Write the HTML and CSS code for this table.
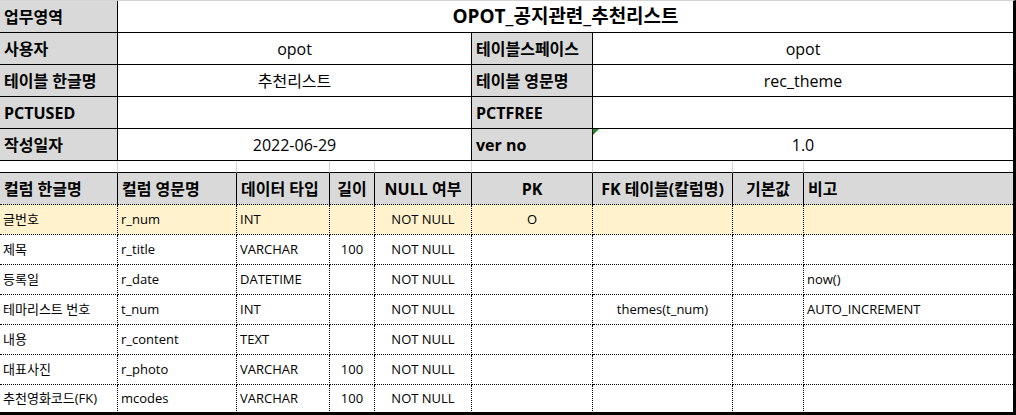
FILE: index.html
```html
<!DOCTYPE html>
<html lang="ko">
<head>
<meta charset="utf-8">
<title>OPOT_공지관련_추천리스트</title>
<link rel="stylesheet" href="styles.css">
</head>
<body>
<div class="sheet">
  <div class="c top lbl">업무영역</div>
  <div class="c top title end">OPOT_공지관련_추천리스트</div>

  <div class="c top lbl">사용자</div>
  <div class="c top val v1">opot</div>
  <div class="c top lbl">테이블스페이스</div>
  <div class="c top val v2 end">opot</div>

  <div class="c top lbl">테이블 한글명</div>
  <div class="c top val v1">추천리스트</div>
  <div class="c top lbl">테이블 영문명</div>
  <div class="c top val v2 end">rec_theme</div>

  <div class="c top lbl">PCTUSED</div>
  <div class="c top val v1"></div>
  <div class="c top lbl">PCTFREE</div>
  <div class="c top val v2 end"></div>

  <div class="c top lbl">작성일자</div>
  <div class="c top val v1">2022-06-29</div>
  <div class="c top lbl">ver no</div>
  <div class="c top val v2 end flag">1.0</div>

  <div class="c sp"></div><div class="c sp"></div><div class="c sp"></div>
  <div class="c sp"></div><div class="c sp"></div><div class="c sp"></div>
  <div class="c sp"></div><div class="c sp"></div><div class="c sp end"></div>

  <div class="c hd">컬럼 한글명</div>
  <div class="c hd">컬럼 영문명</div>
  <div class="c hd">데이터 타입</div>
  <div class="c hd ctr">길이</div>
  <div class="c hd ctr">NULL 여부</div>
  <div class="c hd ctr">PK</div>
  <div class="c hd ctr">FK 테이블(칼럼명)</div>
  <div class="c hd ctr">기본값</div>
  <div class="c hd end">비고</div>

  <div class="c d hl">글번호</div>
  <div class="c d hl">r_num</div>
  <div class="c d hl">INT</div>
  <div class="c d hl ctr"></div>
  <div class="c d hl ctr">NOT NULL</div>
  <div class="c d hl ctr">O</div>
  <div class="c d hl ctr"></div>
  <div class="c d hl ctr"></div>
  <div class="c d hl end"></div>

  <div class="c d">제목</div>
  <div class="c d">r_title</div>
  <div class="c d">VARCHAR</div>
  <div class="c d ctr">100</div>
  <div class="c d ctr">NOT NULL</div>
  <div class="c d ctr"></div>
  <div class="c d ctr"></div>
  <div class="c d ctr"></div>
  <div class="c d end"></div>

  <div class="c d">등록일</div>
  <div class="c d">r_date</div>
  <div class="c d">DATETIME</div>
  <div class="c d ctr"></div>
  <div class="c d ctr">NOT NULL</div>
  <div class="c d ctr"></div>
  <div class="c d ctr"></div>
  <div class="c d ctr"></div>
  <div class="c d end">now()</div>

  <div class="c d">테마리스트 번호</div>
  <div class="c d">t_num</div>
  <div class="c d">INT</div>
  <div class="c d ctr"></div>
  <div class="c d ctr">NOT NULL</div>
  <div class="c d ctr"></div>
  <div class="c d ctr">themes(t_num)</div>
  <div class="c d ctr"></div>
  <div class="c d end">AUTO_INCREMENT</div>

  <div class="c d">내용</div>
  <div class="c d">r_content</div>
  <div class="c d">TEXT</div>
  <div class="c d ctr"></div>
  <div class="c d ctr">NOT NULL</div>
  <div class="c d ctr"></div>
  <div class="c d ctr"></div>
  <div class="c d ctr"></div>
  <div class="c d end"></div>

  <div class="c d">대표사진</div>
  <div class="c d">r_photo</div>
  <div class="c d">VARCHAR</div>
  <div class="c d ctr">100</div>
  <div class="c d ctr">NOT NULL</div>
  <div class="c d ctr"></div>
  <div class="c d ctr"></div>
  <div class="c d ctr"></div>
  <div class="c d end"></div>

  <div class="c d last">추천영화코드(FK)</div>
  <div class="c d last">mcodes</div>
  <div class="c d last">VARCHAR</div>
  <div class="c d last ctr">100</div>
  <div class="c d last ctr">NOT NULL</div>
  <div class="c d last ctr"></div>
  <div class="c d last ctr"></div>
  <div class="c d last ctr"></div>
  <div class="c d last end"></div>
</div>
</body>
</html>
```

FILE: styles.css
```css
html, body {
  margin: 0;
  padding: 0;
  background: #ffffff;
}

body {
  font-family: "Open Sans", "Noto Sans CJK KR", sans-serif;
  color: #000000;
}

.sheet {
  display: grid;
  grid-template-columns: 118px 119px 93px 45px 97px 121px 140px 71px 209px;
  grid-template-rows: repeat(5, 32px) 12px 32px repeat(7, 30px);
  width: 1016px;
  height: 415px;
  box-sizing: border-box;
  border-top: 1px solid #d4d4d4;
  border-right: 3px solid #000000;
}

.c {
  box-sizing: border-box;
  display: flex;
  align-items: center;
  padding: 0 4px;
  white-space: nowrap;
  overflow: hidden;
  line-height: 1;
  position: relative;
}

.top {
  font-size: 16px;
  border-right: 1px solid #000000;
  border-bottom: 1px solid #000000;
}

.lbl {
  background: #d9d9d9;
  font-weight: 700;
}

.title {
  grid-column: 2 / -1;
  justify-content: center;
  font-size: 19px;
  font-weight: 700;
}

.val {
  justify-content: center;
}

.v1 {
  grid-column: span 4;
}

.v2 {
  grid-column: span 3;
}

.flag::before {
  content: "";
  position: absolute;
  left: 0;
  top: 0;
  width: 0;
  height: 0;
  border-top: 6px solid #1f8a1f;
  border-right: 6px solid transparent;
}

.sp {
  border-right: 1px solid #d4d4d4;
  border-bottom: 1px solid #000000;
}

.hd {
  background: #d9d9d9;
  font-weight: 700;
  font-size: 16px;
  border-right: 1px solid #000000;
  border-bottom: 1px dotted #000000;
}

.d {
  font-size: 13px;
  border-right: 1px dotted #000000;
  border-bottom: 1px dotted #000000;
  padding: 0 3px;
}

.hl {
  background: #fff2cc;
}

.ctr {
  justify-content: center;
}

.last {
  border-bottom: 3px solid #000000;
}

.end {
  border-right: none;
}
```
